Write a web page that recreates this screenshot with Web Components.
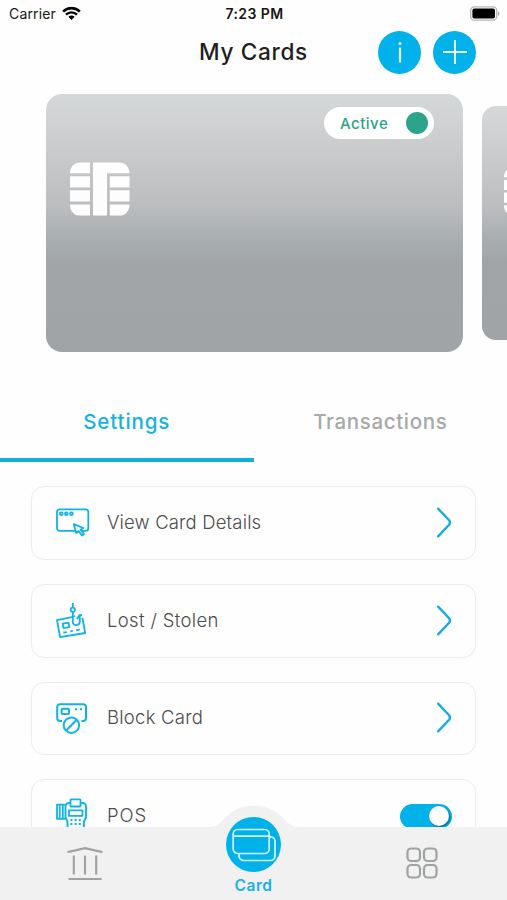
<!DOCTYPE html>
<html lang="en">
<head>
<meta charset="utf-8">
<meta name="viewport" content="width=device-width, initial-scale=1">
<title>My Cards</title>
<style>
  html, body {
    margin: 0;
    height: 100%;
    overflow: hidden;
    background: #fefefe;
    font-family: Inter, "Liberation Sans", sans-serif;
  }
</style>
</head>
<body>
<cards-screen></cards-screen>

<script>
(function () {
  function define(tag, render) {
    if (customElements.get(tag)) {
      return;
    }
    customElements.define(tag, class extends HTMLElement {
      connectedCallback() {
        if (!this.shadowRoot) {
          this.attachShadow({ mode: 'open' });
        }
        this.shadowRoot.innerHTML = render(this);
      }
    });
  }

  const ICONS = {
    details: `
      <rect x="1" y="4.3" width="31.3" height="21.6" rx="2.6"/>
      <circle cx="5.2" cy="8.7" r="1.4"/><circle cx="10.3" cy="8.7" r="1.4"/><circle cx="15.4" cy="8.7" r="1.4"/>
      <path fill="#fefefe" d="M17.8 19.2 20.2 28l2.4-2 3.5 4.5 1.9-1.4-3.4-4.5 2.7-1.6z"/>`,
    lost: `
      <path d="M17 13.8 1 17.1l3.1 17L29.2 30l-2.8-15.2M17 13.6l2-.4M22.7 12.6l3.3-.6"/>
      <path d="m6.7 20.6 5.8-1 .8 4.6-5.8 1z"/>
      <path d="m7.3 29.7 3.4-.6m3.6-.7 2.5-.5m3.3-.6 3.6-.7"/>
      <path d="M16.8 0v4.6M16.8 8.8v10c0 4.8 7 4 7-.2V12l-3 4.1"/>
      <circle cx="16.8" cy="6.8" r="2.1"/>`,
    block: `
      <path d="M6 21H4.2a3 3 0 0 1-3-3V7a2.8 2.8 0 0 1 2.8-2.8h23.2A2.8 2.8 0 0 1 30 7v11a3 3 0 0 1-3 3h-1.5" stroke-width="2"/>
      <rect x="5.6" y="8.8" width="7.4" height="5.2" rx="1.2" stroke-width="2"/>
      <path d="M19 9.2h2.2m2.6 0H26" stroke-width="2"/>
      <circle cx="15.4" cy="25.2" r="7.7" stroke-width="2"/>
      <path d="M10.2 30.5 20.6 20" stroke-width="2"/>`,
    pos: `
      <path d="M9 6.6H1v14.2h8M3.7 6.6v14.2M6.8 6.6v14.2"/>
      <path d="M14.4 5H13a3.5 3.5 0 0 0-3.5 3.5v11l2 4V36M24.7 5h1.8A3.5 3.5 0 0 1 30 8.5v11l-2.1 4V36" stroke-width="1.9"/>
      <rect x="14.5" y="1.3" width="10" height="7.2" rx=".6"/>
      <rect x="13" y="12.3" width="13.5" height="5.6"/>
      <path stroke-dasharray="2 2.2" d="M14.4 22h11M14.4 26h11M14.4 30h11"/>`,
  };

  define('status-bar', () => `
    <style>
      :host {
        display: grid;
        grid-template-columns: 1fr auto 1fr;
        align-items: center;
        height: 27px;
        padding: 0 7px 0 9px;
        box-sizing: border-box;
        color: #161616;
        font-size: 14px;
      }
      .carrier { display: flex; align-items: center; gap: 6px; letter-spacing: .15px; }
      .carrier svg { transform: translateY(-.5px); }
      .time { font-weight: 600; font-size: 14px; letter-spacing: .4px; }
      .battery { justify-self: end; display: block; }
    </style>
    <div class="carrier">
      <span>Carrier</span>
      <svg width="19" height="14" viewBox="0 0 19 14" fill="none" stroke="#050505">
        <path d="M1.1 5.1C5.8.5 13.2.5 17.9 5.1" stroke-width="2.6"/>
        <path d="M4 8.2c3.1-3.1 7.9-3.1 11 0" stroke-width="2.4"/>
        <path fill="#050505" stroke="none" d="M6.4 10.2c1.8-1.6 4.4-1.6 6.2 0l-3.1 3.4z"/>
      </svg>
    </div>
    <span class="time">7:23 PM</span>
    <svg class="battery" width="30" height="15" viewBox="0 0 30 15">
      <rect x=".7" y=".8" width="26" height="13.4" rx="3.6" fill="#fefefe" stroke="#b5b5b5" stroke-width="1.3"/>
      <rect x="2.4" y="2.6" width="22.6" height="9.8" rx="2" fill="#000"/>
      <path d="M28 5.2c1.9.7 1.9 3.9 0 4.6z" fill="#a9a9a9"/>
    </svg>
  `);

  define('round-button', () => `
    <style>
      :host {
        display: flex;
        align-items: center;
        justify-content: center;
        width: 43px;
        height: 43px;
        border-radius: 50%;
        background: #00b2e9;
      }
      ::slotted(svg) { display: block; }
    </style>
    <slot></slot>
  `);

  define('page-header', () => `
    <style>
      :host {
        display: grid;
        grid-template-columns: 1fr auto 1fr;
        align-items: center;
        height: 50px;
        padding: 0 31px;
      }
      h1 {
        grid-column: 2;
        margin: 0;
        color: #1f1f1f;
        font-size: 22.6px;
        font-weight: 450;
        letter-spacing: .65px;
        line-height: 28px;
      }
      .actions { display: flex; gap: 12px; justify-self: end; }
    </style>
    <h1><slot></slot></h1>
    <div class="actions"><slot name="actions"></slot></div>
  `);

  define('bank-card', (el) => `
    <style>
      :host {
        display: block;
        flex: none;
        box-sizing: border-box;
        width: 417px;
        height: 258px;
        padding: 13.5px 29px 0 24.5px;
        border-radius: 16px;
        background: linear-gradient(#d5d8d9 0, #cbcccd 20%, #bcbdbf 43%, #a8adb0 57%, #a1a5a8 66%, #a1a4a7 100%);
      }
      :host([compact]) {
        width: 379px;
        height: 234px;
        padding: 12px 26px 0 22px;
        border-radius: 14px;
      }
      .top { display: flex; justify-content: flex-end; height: 55px; }
      :host([compact]) .top { height: 49px; }
      .status {
        display: flex;
        align-items: center;
        justify-content: space-between;
        box-sizing: border-box;
        width: 110px;
        height: 32px;
        padding: 0 6px 0 16.5px;
        border-radius: 16px;
        background: #fff;
        color: #2ba489;
        font-size: 15px;
        font-weight: 500;
        letter-spacing: .5px;
      }
      .dot { width: 22px; height: 22px; border-radius: 50%; background: #2ba489; }
      .chip { display: block; width: 60px; height: 54px; }
      :host([compact]) .chip { width: 54px; height: 49px; }
    </style>
    <div class="top">
      ${el.hasAttribute('status') ? `<div class="status"><span>${el.getAttribute('status')}</span><i class="dot"></i></div>` : ''}
    </div>
    <svg class="chip" viewBox="0 0 60 54" fill="#fdfdfd">
      <path d="M0 11.2C0 5 4 .4 10.5.4H20v10.8H0z"/>
      <path d="M0 14.2h20v11.2H0zM0 28.2h20v11.2H0z"/>
      <path d="M0 42.4h20v11.2h-9.5C4 53.6 0 49 0 42.4z"/>
      <path d="M23 .4h26C55.5.4 59.5 5 59.5 11.2H37v42.4H23z"/>
      <path d="M39.8 14.2h19.7v11.2H39.8zM39.8 28.2h19.7v11.2H39.8z"/>
      <path d="M39.8 42.4h19.7C59.5 49 55.5 53.6 49 53.6h-9.2z"/>
    </svg>
  `);

  define('card-carousel', () => `
    <style>
      :host {
        display: flex;
        align-items: center;
        gap: 19px;
        height: 258px;
        padding: 16.6px 0 0 45.5px;
        overflow: hidden;
      }
    </style>
    <slot></slot>
  `);

  define('tab-item', () => `
    <style>
      :host {
        flex: 1;
        display: flex;
        align-items: center;
        justify-content: center;
        padding-top: 3px;
        border-bottom: 4px solid transparent;
        color: #a6a8a9;
        font-size: 20.5px;
        font-weight: 450;
        letter-spacing: .65px;
      }
      :host([selected]) {
        color: #14b2e4;
        border-color: #0fade0;
        font-weight: 500;
        letter-spacing: .9px;
      }
    </style>
    <slot></slot>
  `);

  define('tab-strip', () => `
    <style>
      :host { display: flex; height: 80.4px; margin-top: 30px; padding-bottom: 24px; }
    </style>
    <slot></slot>
  `);

  define('toggle-switch', () => `
    <style>
      :host {
        display: flex;
        justify-content: flex-end;
        box-sizing: border-box;
        width: 51.5px;
        height: 25px;
        margin-right: 1px;
        padding: 2px 2.5px;
        border-radius: 13px;
        background: #00b2e9;
      }
      .knob {
        width: 20.5px;
        height: 20.5px;
        border-radius: 50%;
        background: #fff;
        box-shadow: 1px 1px 2px rgba(0, 50, 90, .65);
      }
    </style>
    <i class="knob"></i>
  `);

  define('setting-row', (el) => `
    <style>
      :host {
        display: flex;
        align-items: center;
        box-sizing: border-box;
        height: 73.8px;
        padding: 0 22.5px 0 23.5px;
        border: 1.5px solid #ececec;
        border-radius: 13px;
        background: #fefefe;
        color: #4c4c4c;
        font-size: 18.5px;
        font-weight: 350;
      }
      .icon { flex: none; margin-right: 17.5px; }
      .label { flex: 1; letter-spacing: var(--label-spacing, .15px); transform: translateY(-1px); }
      .chevron { transform: translate(-.5px, -.5px); }
    </style>
    <svg class="icon" width="34" height="36" viewBox="0 0 34 36" fill="none" stroke="#0fb3e7" stroke-width="1.8" stroke-linejoin="round">
      ${ICONS[el.getAttribute('icon')] || ''}
    </svg>
    <span class="label"><slot></slot></span>
    <slot name="control">
      <svg class="chevron" width="16" height="32" viewBox="0 0 16 32" fill="none" stroke="#16addb" stroke-width="2.4" stroke-linecap="round">
        <path d="m1.6 2.2 11 11.5q1.8 2.3 0 4.6l-11 11.5"/>
      </svg>
    </slot>
  `);

  define('setting-list', () => `
    <style>
      :host {
        display: flex;
        flex: 1;
        flex-direction: column;
        gap: 24px;
        min-height: 0;
        padding: 0 31px;
      }
      ::slotted(*) { flex: none; }
      ::slotted([icon="lost"]) { --label-spacing: .35px; }
      ::slotted([icon="block"]) { --label-spacing: .25px; }
      ::slotted([icon="pos"]) { --label-spacing: .9px; }
    </style>
    <slot></slot>
  `);

  define('bottom-nav', () => `
    <style>
      :host {
        position: absolute;
        left: 0;
        right: 0;
        bottom: 0;
        display: grid;
        grid-template-columns: 1fr 168px 1fr;
        height: 73px;
        background: #f1f1f1;
      }
      /* raised bump behind the current item */
      .bump { position: absolute; left: 50%; top: -22px; margin-left: -46px; }
      .item { display: flex; align-items: center; justify-content: center; }
      .item.more { padding-bottom: 1px; }
      .current {
        position: relative;
        display: flex;
        flex-direction: column;
        align-items: center;
        margin-top: -10px;
        color: #17b1e3;
        font-size: 15.5px;
        font-weight: 600;
        letter-spacing: .5px;
      }
      .disc {
        display: flex;
        align-items: center;
        justify-content: center;
        width: 55px;
        height: 55px;
        margin-bottom: 4px;
        border-radius: 50%;
        background: #00b2e9;
      }
    </style>
    <svg class="bump" width="92" height="23" viewBox="0 0 92 23" fill="#f1f1f1">
      <path d="M0 23v-1c8 0 11-3 17-9C25 5 34 .8 46 .8S67 5 75 13c6 6 9 9 17 9v1z"/>
    </svg>
    <div class="item">
      <svg width="36" height="36" viewBox="0 0 36 36" fill="none" stroke="#9fa2a2" stroke-width="2.1">
        <path d="M1.5 6.8V5.9L18 2.2l16.5 3.7v.9M6.8 9.5v19M18 9.5v19M29.2 9.5v19"/>
        <path d="M1.5 33h33"/>
      </svg>
    </div>
    <div class="current">
      <div class="disc">
        <svg width="44" height="34" viewBox="0 0 44 34" fill="none" stroke="#d9f6ff" stroke-width="1.7">
          <path d="M37.2 8.8h1.3a4.5 4.5 0 0 1 4.5 4.5V28a4.5 4.5 0 0 1-4.5 4.5H11.5A4.5 4.5 0 0 1 7 28v-2.6"/>
          <rect x="1.2" y="1.5" width="36" height="24" rx="4.5"/>
          <path d="M1.2 8.2h36"/>
        </svg>
      </div>
      <span>Card</span>
    </div>
    <div class="item more">
      <svg width="32" height="32" viewBox="0 0 32 32" fill="none" stroke="#a0a3a3" stroke-width="2.2">
        <rect x="1.5" y="1.5" width="12.5" height="12.5" rx="3.8"/>
        <rect x="18" y="1.5" width="12.5" height="12.5" rx="3.8"/>
        <rect x="1.5" y="18" width="12.5" height="12.5" rx="3.8"/>
        <rect x="18" y="18" width="12.5" height="12.5" rx="3.8"/>
      </svg>
    </div>
  `);

  define('cards-screen', () => `
    <style>
      :host {
        position: relative;
        display: flex;
        flex-direction: column;
        height: 100vh;
        overflow: hidden;
      }
    </style>
    <status-bar></status-bar>
    <page-header>My Cards
      <round-button slot="actions">
        <svg width="8" height="24" viewBox="0 0 8 24" fill="#e6f9ff">
          <circle cx="4" cy="3.5" r="1.6"/>
          <rect x="2.9" y="7.5" width="2.2" height="15"/>
        </svg>
      </round-button>
      <round-button slot="actions">
        <svg width="24" height="24" viewBox="0 0 24 24" stroke="#e6f9ff" stroke-width="2">
          <path d="M12 0v24M0 12h24"/>
        </svg>
      </round-button>
    </page-header>
    <card-carousel>
      <bank-card status="Active"></bank-card>
      <bank-card compact></bank-card>
    </card-carousel>
    <tab-strip>
      <tab-item selected>Settings</tab-item>
      <tab-item>Transactions</tab-item>
    </tab-strip>
    <setting-list>
      <setting-row icon="details">View Card Details</setting-row>
      <setting-row icon="lost">Lost / Stolen</setting-row>
      <setting-row icon="block">Block Card</setting-row>
      <setting-row icon="pos">POS<toggle-switch slot="control"></toggle-switch></setting-row>
    </setting-list>
    <bottom-nav></bottom-nav>
  `);
})();
</script>
</body>
</html>
